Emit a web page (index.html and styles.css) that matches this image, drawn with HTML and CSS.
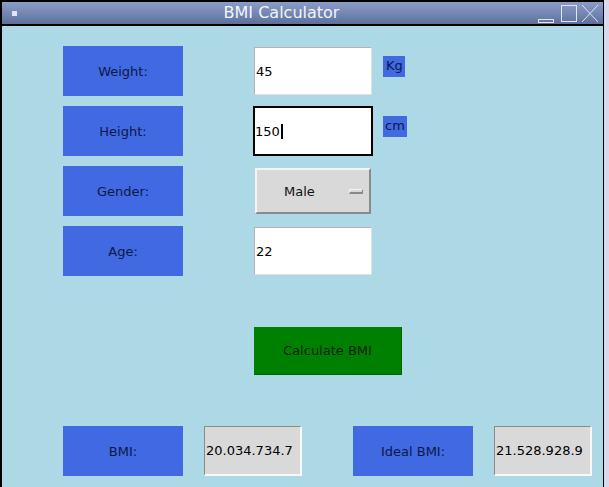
FILE: index.html
```html
<!DOCTYPE html>
<html lang="en">
<head>
<meta charset="utf-8">
<title>BMI Calculator</title>
<link rel="stylesheet" href="styles.css">
</head>
<body>
<div class="screen">
  <div class="window">
    <div class="titlebar">
      <span class="app-icon"></span>
      <span class="title">BMI Calculator</span>
      <svg class="controls" width="64" height="22" viewBox="0 0 64 22">
        <rect x="2.5" y="17.5" width="15" height="3" fill="none" stroke="#dfe5f3" stroke-width="1"/>
        <rect x="25.5" y="3.5" width="15" height="16" fill="none" stroke="#dfe5f3" stroke-width="1"/>
        <path d="M46 3 L62 20 M62 3 L46 20" fill="none" stroke="#dfe5f3" stroke-width="1"/>
      </svg>
    </div>
    <div class="content">
      <div class="form">
        <div class="label">Weight:</div>
        <div class="entry"><div class="entry-box">45</div></div>
        <div class="unit unit-kg">Kg</div>

        <div class="label">Height:</div>
        <div class="entry focused"><div class="entry-box">150<span class="caret"></span></div></div>
        <div class="unit">cm</div>

        <div class="label">Gender:</div>
        <div class="option"><div class="option-btn"><span class="option-text">Male</span><span class="indicator"></span></div></div>
        <div></div>

        <div class="label">Age:</div>
        <div class="entry"><div class="entry-box">22</div></div>
        <div></div>
      </div>

      <div class="actions">
        <div class="calc">Calculate BMI</div>
      </div>

      <div class="results">
        <div class="label">BMI:</div>
        <div class="result">20.034.734.7</div>
        <div class="label label-ideal">Ideal BMI:</div>
        <div class="result">21.528.928.9</div>
      </div>
    </div>
  </div>
  <div class="edge"></div>
</div>
</body>
</html>
```

FILE: styles.css
```css
html, body {
  margin: 0;
  padding: 0;
  background: #d9d9ec;
}

body {
  font-family: "DejaVu Sans", "Liberation Sans", sans-serif;
  font-size: 13px;
  color: #000;
  overflow: hidden;
}

.screen {
  display: flex;
  width: 609px;
  height: 487px;
}

.window {
  width: 601px;
  border-left: 2px solid #000;
  border-right: 1px solid #000;
  border-top: 2px solid #000;
  background: #add8e6;
  display: flex;
  flex-direction: column;
  height: 485px;
}

.edge {
  flex: 1;
  background: #d9d9ec;
}

.titlebar {
  height: 22px;
  border-bottom: 2px solid #000;
  background: linear-gradient(#8a9cc6, #7488b3 50%, #5d7099);
  display: flex;
  align-items: center;
}

.app-icon {
  width: 5px;
  height: 5px;
  margin-left: 10px;
  background: #dfe6f5;
}

.title {
  flex: 1;
  margin-left: 10px;
  text-align: center;
  color: #f2f4f9;
  font-size: 16px;
  line-height: 22px;
}

.controls {
  display: block;
  margin-right: 3px;
}

.content {
  flex: 1;
  padding: 20px 0 0 61px;
}

.form {
  display: grid;
  grid-template-columns: 120px 120px auto;
  grid-auto-rows: 50px;
  column-gap: 70px;
  row-gap: 10px;
}

.form > :nth-child(3n) {
  margin-left: -60px;
}

.label {
  box-sizing: border-box;
  width: 120px;
  height: 50px;
  background: #4169e1;
  color: #0d1848;
  display: flex;
  align-items: center;
  justify-content: center;
}

.entry {
  padding: 1px;
  display: flex;
}

.entry-box {
  flex: 1;
  background: #fff;
  border-top: 1px solid #b4b4b4;
  border-left: 1px solid #b4b4b4;
  border-right: 1px solid #e2e2e2;
  border-bottom: 1px solid #e2e2e2;
  display: flex;
  align-items: center;
  padding-left: 1px;
}

.entry.focused {
  padding: 0;
}

.entry.focused .entry-box {
  border: 2px solid #000;
  padding-left: 0;
}

.caret {
  display: inline-block;
  width: 2px;
  height: 15px;
  background: #000;
  margin-left: 1px;
}

.unit {
  justify-self: start;
  align-self: start;
  margin-top: 10px;
  background: #4169e1;
  color: #0d1848;
  padding: 0 2px;
  line-height: 20px;
  height: 21px;
}

.unit-kg {
  padding: 0 2px 0 3px;
}

.option {
  padding: 2px;
  display: flex;
}

.option-btn {
  flex: 1;
  background: #d9d9d9;
  border-top: 2px solid #f4f4f4;
  border-left: 2px solid #f4f4f4;
  border-right: 2px solid #8a8a8a;
  border-bottom: 2px solid #8a8a8a;
  display: flex;
  align-items: center;
}

.option-text {
  margin-left: 27px;
  color: #111;
}

.indicator {
  margin-left: auto;
  margin-right: 6px;
  width: 12px;
  height: 2px;
  background: #d9d9d9;
  border-top: 1px solid #f4f4f4;
  border-left: 1px solid #f4f4f4;
  border-right: 1px solid #8a8a8a;
  border-bottom: 2px solid #8a8a8a;
}

.actions {
  margin-top: 50px;
  padding-left: 190px;
  display: flex;
}

.calc {
  width: 147px;
  height: 47px;
  margin: 1px;
  background: #008000;
  border-right: 1px solid #006400;
  border-bottom: 1px solid #006400;
  color: #0a200a;
  display: flex;
  align-items: center;
  justify-content: center;
}

.results {
  margin-top: 50px;
  display: flex;
  align-items: center;
}

.result {
  box-sizing: border-box;
  width: 98px;
  height: 50px;
  margin-left: 21px;
  background: #d9d9d9;
  border-top: 1px solid #8a8a8a;
  border-left: 1px solid #8a8a8a;
  border-right: 2px solid #f8f8f8;
  border-bottom: 2px solid #f8f8f8;
  display: flex;
  align-items: center;
  padding-left: 1px;
  color: #000;
}

.label-ideal {
  margin-left: 51px;
}
```
